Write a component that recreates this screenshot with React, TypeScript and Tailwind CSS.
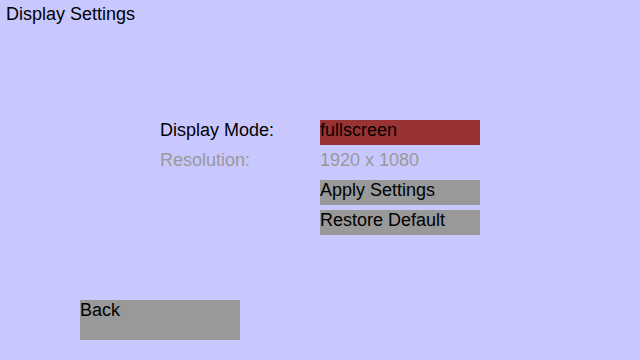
export default function App() {
  const font = { fontFamily: '"Liberation Sans", Arial, sans-serif' };
  return (
    <div
      className="w-[640px] h-[360px] bg-[#c8c8ff] text-[18px] leading-[21px] text-black overflow-hidden flex flex-col"
      style={font}
    >
      <div className="pl-[6px] pt-[4px] h-[120px]">Display Settings</div>

      <div className="grid grid-cols-[160px_160px] gap-y-[5px] ml-[160px]">
        <div className="h-[25px]">Display Mode:</div>
        <div className="h-[25px] bg-[#993333]">fullscreen</div>

        <div className="h-[25px] text-[#999999]">Resolution:</div>
        <div className="h-[25px] text-[#999999]">1920 x 1080</div>

        <div className="h-[25px]" />
        <div className="h-[25px] bg-[#999999]">Apply Settings</div>

        <div className="h-[25px]" />
        <div className="h-[25px] bg-[#999999]">Restore Default</div>
      </div>

      <div className="mt-auto mb-[20px] ml-[80px] w-[160px] h-[40px] bg-[#999999]">Back</div>
    </div>
  );
}
